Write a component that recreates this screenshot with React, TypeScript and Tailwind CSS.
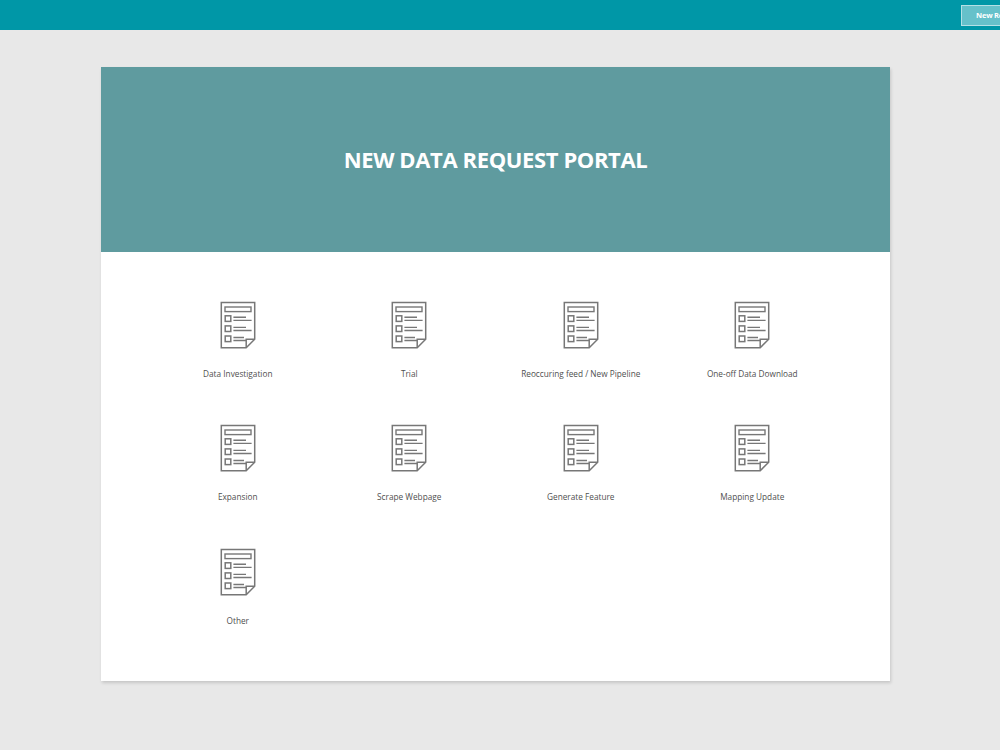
const requestTypes = [
  'Data Investigation',
  'Trial',
  'Reoccuring feed / New Pipeline',
  'One-off Data Download',
  'Expansion',
  'Scrape Webpage',
  'Generate Feature',
  'Mapping Update',
  'Other',
]

function FormIcon() {
  return (
    <svg width="36" height="48" viewBox="0 0 36 48" fill="none" stroke="#777777" strokeWidth="1.5">
      <path d="M1.3 1.5H34.7V38.2L26.2 46.7H1.3Z" />
      <path d="M26.2 46.7V38.2H34.7" />
      <rect x="5" y="6" width="26" height="4.6" strokeWidth="1.4" />
      <rect x="5.2" y="14.8" width="5.6" height="5.6" />
      <rect x="5.2" y="24.9" width="5.6" height="5.6" />
      <rect x="5.2" y="35" width="5.6" height="5.6" />
      <path d="M13.4 16.3H26M13.4 19.4H31.6M13.4 26.4H26M13.4 29.5H31.6M13.4 36.5H24M13.4 39.5H26.2" strokeWidth="1.4" />
    </svg>
  )
}

interface RequestTileProps {
  label: string
}

function RequestTile({ label }: RequestTileProps) {
  return (
    <div className="flex h-[123.4px] flex-col items-center">
      <FormIcon />
      <span className="mt-[17px] text-[8.25px] leading-4 whitespace-nowrap text-[#4f4f4f]">{label}</span>
    </div>
  )
}

export default function App() {
  return (
    <div className="h-[750px] w-full overflow-hidden bg-[#e8e8e8] font-['Open_Sans',sans-serif]">
      <header className="flex h-[30px] items-center justify-end overflow-hidden bg-[#0097a7]">
        <button className="h-[21px] w-[39px] shrink-0 overflow-hidden border border-r-0 border-[#b5e0e5] bg-[#66c1ca] pt-px pl-[14px] text-left text-[7.5px] font-bold tracking-[-0.2px] whitespace-nowrap text-white">
          New Request
        </button>
      </header>

      <main className="mt-[37px] ml-[101px] h-[614px] w-[789px] bg-white shadow-[1px_2px_3px_rgba(0,0,0,0.15)]">
        <div className="flex h-[185px] items-center justify-center bg-[#5f9b9f]">
          <h1 className="text-[22px] font-bold tracking-[-0.38px] whitespace-nowrap text-white">NEW DATA REQUEST PORTAL</h1>
        </div>
        <div className="ml-[51px] grid w-[686px] grid-cols-4 pt-[49px]">
          {requestTypes.map((label) => (
            <RequestTile key={label} label={label} />
          ))}
        </div>
      </main>
    </div>
  )
}
